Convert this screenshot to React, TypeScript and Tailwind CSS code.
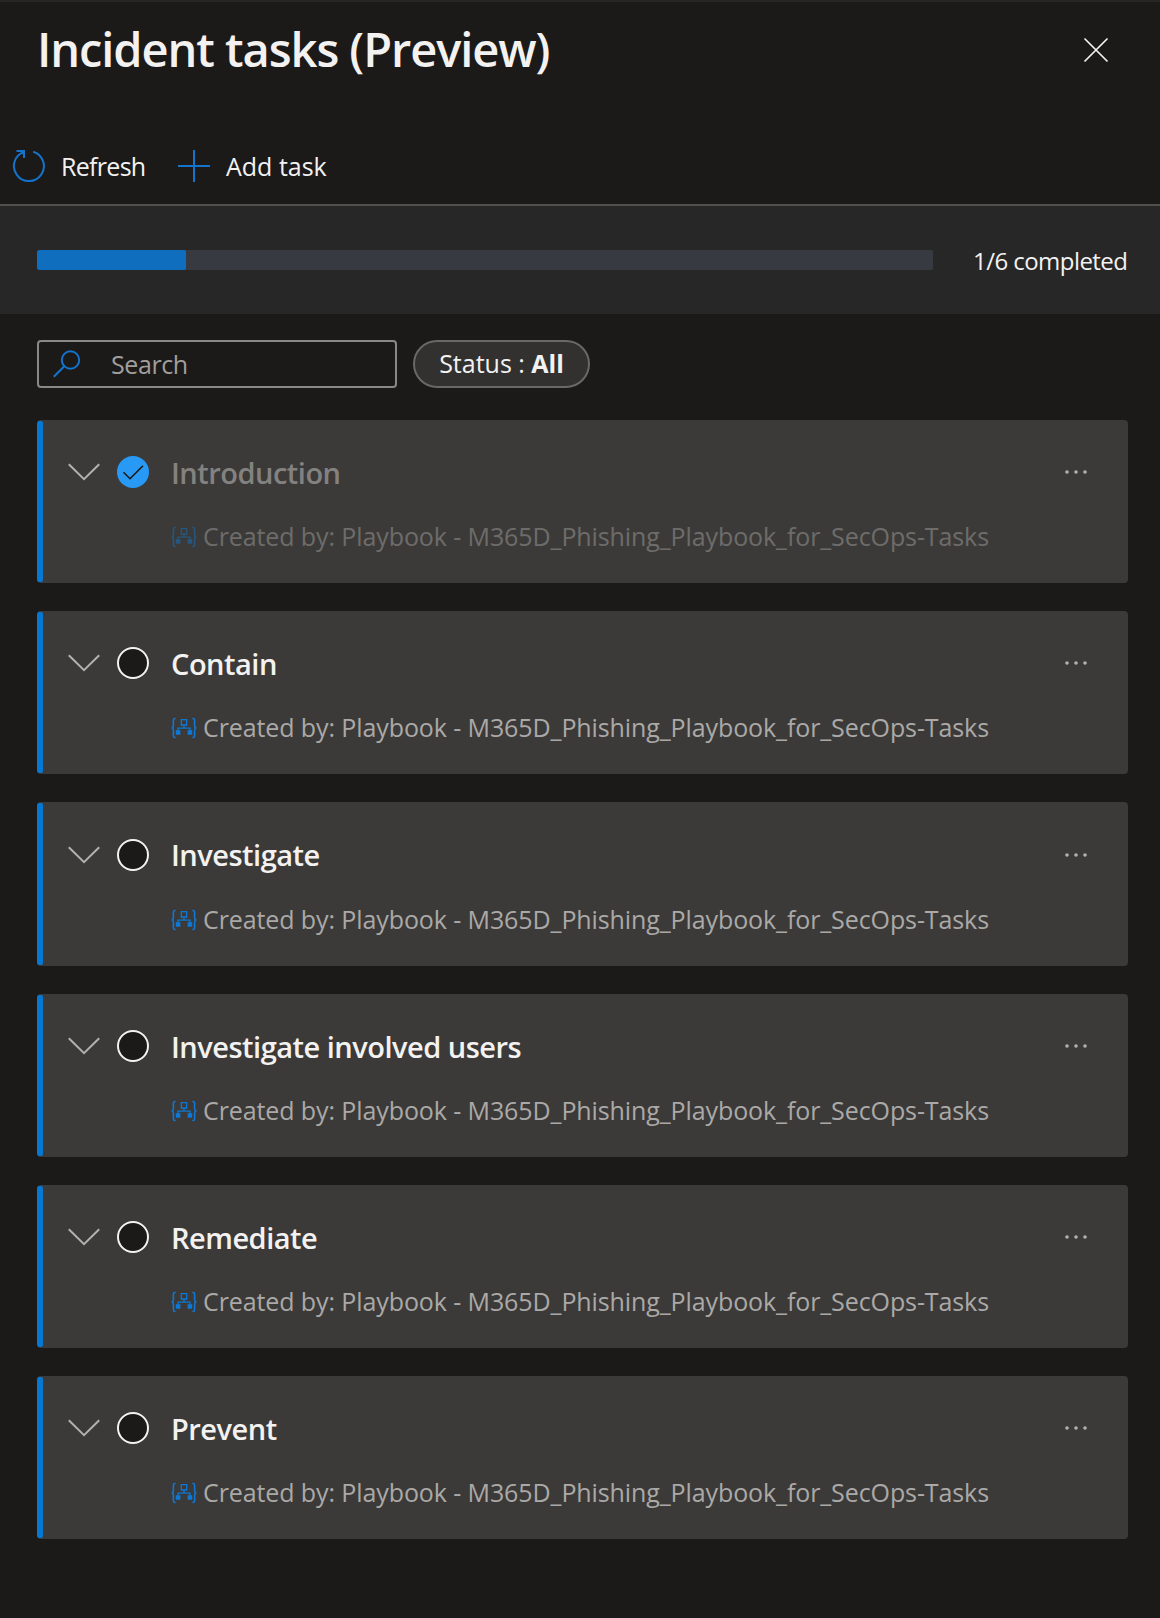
const tasks = [
  { title: "Introduction", done: true },
  { title: "Contain", done: false },
  { title: "Investigate", done: false },
  { title: "Investigate involved users", done: false },
  { title: "Remediate", done: false },
  { title: "Prevent", done: false },
];

function PlaybookIcon() {
  return (
    <svg width="26" height="22" viewBox="0 0 26 22" fill="none" stroke="#0f78d4" className="shrink-0">
      <path d="M4.6 1.5H4Q2.4 1.5 2.4 3V8.6Q2.4 10.6 0.8 11Q2.4 11.4 2.4 13.4V19Q2.4 20.5 4 20.5H4.6" strokeWidth="1.6" />
      <path d="M21.4 1.5H22Q23.6 1.5 23.6 3V8.6Q23.6 10.6 25.2 11Q23.6 11.4 23.6 13.4V19Q23.6 20.5 22 20.5H21.4" strokeWidth="1.6" />
      <path d="M10.3 2.6H15.7V8H10.3ZM13 8V11.2M7 14V11.2H19V14" strokeWidth="1.3" />
      <path d="M4.8 13.2H9.4V17.8H4.8ZM16.6 13.2H21.2V17.8H16.6Z" fill="#0f78d4" stroke="none" />
    </svg>
  );
}

function TaskCard({ title, done }: { title: string; done: boolean }) {
  return (
    <div className="flex h-[163.24px] overflow-hidden rounded-[4px] bg-[#3b3a38]">
      <div className="my-px w-[6px] shrink-0 rounded-[2px] bg-[#0778d1]" />
      <div className="flex-1 pl-[25px]">
        <div className="flex h-[104.1px] items-center">
          <svg width="32" height="20" viewBox="0 0 32 20" fill="none" stroke="#b3b1ae" strokeWidth="2" className="shrink-0">
            <path d="M0.8 2.2L16 17.2L31.2 2.2" />
          </svg>
          <svg width="32" height="32" viewBox="0 0 32 32" className="ml-[17px] shrink-0">
            {done ? (
              <>
                <circle cx="16" cy="16" r="16" fill="#2899f5" />
                <path d="M6.5 16.3L13 22.7L26 9.8" fill="none" stroke="#1b1a19" strokeWidth="1.6" />
              </>
            ) : (
              <circle cx="16" cy="16" r="15" fill="#1b1a19" stroke="#f3f2f1" strokeWidth="2" />
            )}
          </svg>
          <h2
            className={
              done
                ? "ml-[22px] flex-1 pt-px text-[29px] font-semibold tracking-[-0.5px] text-[#848280]"
                : "ml-[22px] flex-1 pt-px text-[29px] font-semibold tracking-[-0.5px] text-[#f3f2f1]"
            }
          >
            {title}
          </h2>
          <svg width="24" height="6" viewBox="0 0 24 6" fill="#b3b1ae" className="mr-[40px] shrink-0">
            <circle cx="3" cy="3" r="1.8" />
            <circle cx="12" cy="3" r="1.8" />
            <circle cx="21" cy="3" r="1.8" />
          </svg>
        </div>
        <div
          className={
            done
              ? "ml-[103px] flex h-[26px] items-center opacity-45"
              : "ml-[103px] flex h-[26px] items-center"
          }
        >
          <PlaybookIcon />
          <span className="-mt-0.5 ml-[6px] whitespace-nowrap text-[25px] leading-[26px] tracking-[-0.1px] text-[#aba9a7]">
            Created by: Playbook - M365D_Phishing_Playbook_for_SecOps-Tasks
          </span>
        </div>
      </div>
    </div>
  );
}

export default function App() {
  return (
    <main className="h-[1618px] w-[1160px] overflow-hidden border-t-2 border-[#272625] bg-[#1b1a19] font-['Open_Sans','Noto_Sans',sans-serif] text-[#f3f2f1]">
      <header className="flex h-[95px] items-center justify-between pl-[37px] pr-[51px]">
        <h1 className="whitespace-nowrap text-[47px] font-semibold tracking-[-1.07px]">Incident tasks (Preview)</h1>
        <svg width="26" height="26" viewBox="0 0 26 26" fill="none" stroke="#f3f2f1" strokeWidth="1.7">
          <path d="M1.5 1.5L24.5 24.5M24.5 1.5L1.5 24.5" />
        </svg>
      </header>

      <nav className="flex h-[109px] items-center border-b-2 border-[#52504d] pl-3 pt-[31px] text-[25px]">
        <svg width="34" height="34" viewBox="0 0 34 34" fill="none" stroke="#1373cd" strokeWidth="2">
          <path d="M21.2 2.7A15 15 0 1 1 12 2.9" />
          <path d="M4.5 2H12V9M12 2L9.5 4.8" />
        </svg>
        <span className="ml-[15px] w-[85px] whitespace-nowrap pt-0.5 tracking-[-0.7px]">Refresh</span>
        <svg width="32" height="32" viewBox="0 0 32 32" fill="none" stroke="#1373cd" strokeWidth="2" className="ml-[32px]">
          <path d="M16 0V32M0 16H32" />
        </svg>
        <span className="ml-[16px] whitespace-nowrap pt-0.5">Add task</span>
      </nav>

      <section className="flex h-[108px] items-center bg-[#272727] pl-[37px]">
        <div className="h-5 w-[896px] overflow-hidden rounded-[2px] bg-[#373a40]">
          <div className="h-full w-[149px] rounded-[2px] bg-[#106ebe]" />
        </div>
        <span className="ml-[40px] whitespace-nowrap pt-0.5 text-[24px] tracking-[-0.55px]">1/6 completed</span>
      </section>

      <div className="flex gap-4 px-[37px] pt-[26px]">
        <div className="flex h-12 w-[360px] items-center rounded-[4px] border-2 border-[#8a8886] pl-[14px]">
          <svg width="28" height="28" viewBox="0 0 28 28" fill="none" stroke="#1373cd" strokeWidth="2">
            <circle cx="17.5" cy="10" r="8.7" />
            <path d="M11.3 16.2L0.8 26.7" />
          </svg>
          <span className="ml-[30px] pt-0.5 text-[25px] tracking-[-0.4px] text-[#a19f9d]">Search</span>
        </div>
        <div className="flex h-12 w-[177px] items-center justify-center whitespace-pre rounded-full border-2 border-[#6a6866] bg-[#323130] text-[25px]">
          Status : <b>All</b>
        </div>
      </div>

      <div className="flex flex-col gap-7 pl-[37px] pr-8 pt-8">
        {tasks.map((task) => (
          <TaskCard key={task.title} title={task.title} done={task.done} />
        ))}
      </div>
    </main>
  );
}
